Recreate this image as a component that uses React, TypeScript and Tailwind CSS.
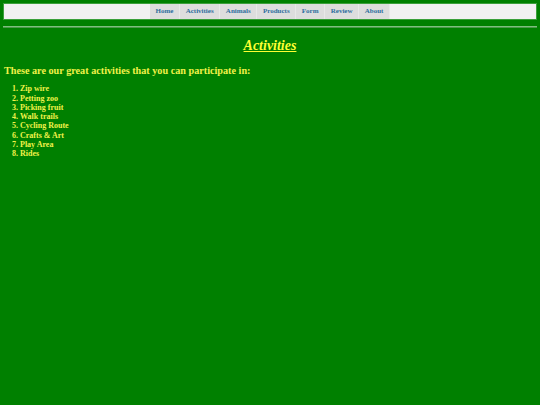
import React from "react";

const items = ["Home", "Activities", "Animals", "Products", "Form", "Review", "About"];
const acts = ["Zip wire", "Petting zoo", "Picking fruit", "Walk trails", "Cycling Route", "Crafts & Art", "Play Area", "Rides"];

export default function App() {
  return (
    <div className="min-h-[405px] bg-[#008000] px-[3px] pt-[3px] font-['Liberation_Serif',serif]">
      <nav className="flex h-[17px] justify-center border border-[#3aa03a] bg-[#f1f1f1]">
        <ul className="flex">
          {items.map((t) => (
            <li key={t} className="flex items-center border-r border-[#e8e8e8] bg-[#dddddd] px-[5.6px] text-[7px] font-bold text-[#2e6e9e]">
              {t}
            </li>
          ))}
        </ul>
      </nav>
      <div className="mt-[6px] h-[2px] border-t border-[#7fbf7f] bg-[#4a9a4a]" />
      <h1 className="mt-[7px] text-center text-[14px] font-bold italic text-[#ffff33] underline">Activities</h1>
      <h2 className="mt-[7px] px-[1px] text-[10.2px] font-bold text-[#f2f24a]">
        These are our great activities that you can participate in:
      </h2>
      <ol className="mt-[6px] list-inside list-decimal pl-[9px] text-[8px] leading-[9.3px] font-bold text-[#f2f24a]">
        {acts.map((a) => (
          <li key={a}>{a}</li>
        ))}
      </ol>
    </div>
  );
}
